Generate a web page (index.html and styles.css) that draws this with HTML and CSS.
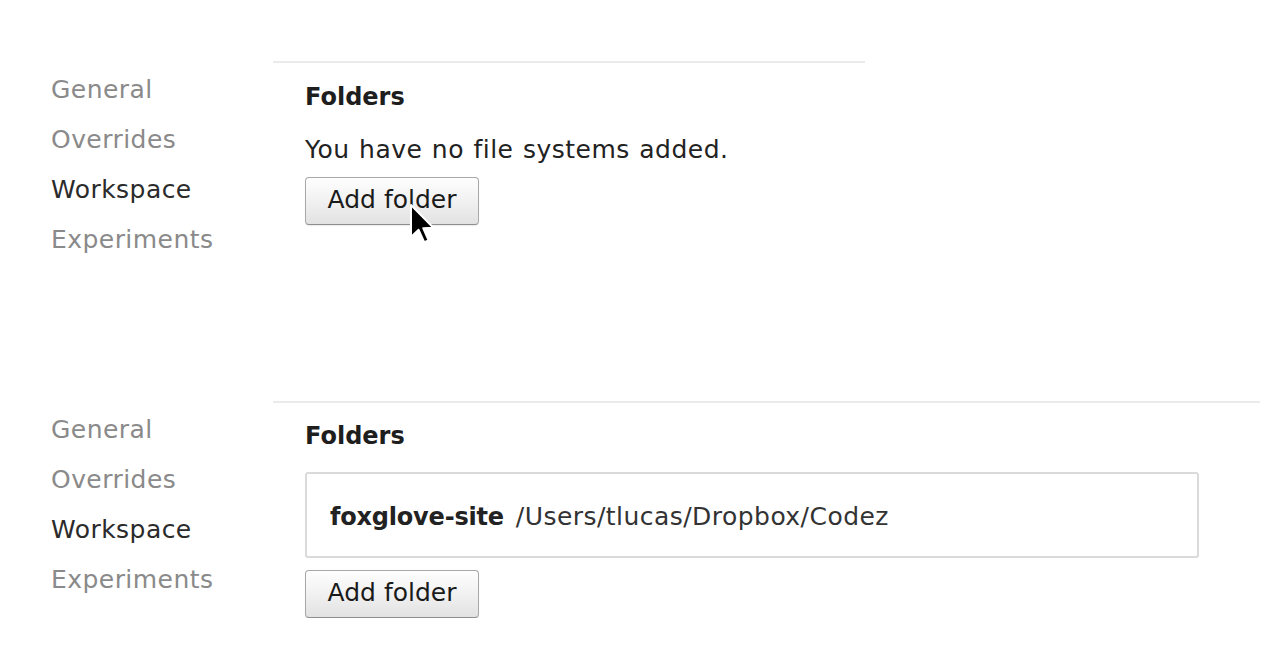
FILE: index.html
```html
<!DOCTYPE html>
<html>
<head>
<meta charset="utf-8">
<link rel="stylesheet" href="styles.css">
</head>
<body>
<div class="page">
  <section class="panel panel-first">
    <nav class="sidebar">
      <div class="nav-item">General</div>
      <div class="nav-item">Overrides</div>
      <div class="nav-item active">Workspace</div>
      <div class="nav-item">Experiments</div>
    </nav>
    <div class="content content-narrow">
      <h2 class="heading">Folders</h2>
      <p class="empty">You have no file systems added.</p>
      <div class="btn-wrap">
        <button class="btn">Add folder</button>
        <svg class="cursor" width="26" height="42" viewBox="0 0 13 21">
          <path d="M1 1 L1 17 L4.8 13.4 L7.6 19.6 L9.8 18.7 L7.1 12.6 L12.2 12.4 Z" fill="#000" stroke="#fff" stroke-width="1" stroke-linejoin="round"/>
        </svg>
      </div>
    </div>
  </section>

  <section class="panel panel-second">
    <nav class="sidebar">
      <div class="nav-item">General</div>
      <div class="nav-item">Overrides</div>
      <div class="nav-item active">Workspace</div>
      <div class="nav-item">Experiments</div>
    </nav>
    <div class="content content-wide">
      <h2 class="heading">Folders</h2>
      <div class="folder-list">
        <div class="folder-row">
          <span class="folder-name">foxglove-site</span>
          <span class="folder-path">/Users/tlucas/Dropbox/Codez</span>
        </div>
      </div>
      <div class="btn-wrap">
        <button class="btn">Add folder</button>
      </div>
    </div>
  </section>
</div>
</body>
</html>
```

FILE: styles.css
```css
html, body {
  margin: 0;
  padding: 0;
  background: #ffffff;
}

body {
  font-family: "DejaVu Sans", Verdana, sans-serif;
  color: #222222;
  font-size: 25px;
}

.page {
  display: flex;
  flex-direction: column;
}

.panel {
  display: flex;
  flex-direction: row;
  align-items: flex-start;
}

.panel-first {
  margin-top: 61px;
  height: 340px;
}

.sidebar {
  width: 222px;
  padding-left: 51px;
  padding-top: 4px;
  display: flex;
  flex-direction: column;
}

.nav-item {
  height: 50px;
  line-height: 50px;
  color: #8a8a8a;
  white-space: nowrap;
  letter-spacing: 0.45px;
}

.nav-item.active {
  color: #2b2b2b;
}

.content {
  border-top: 2px solid #ebebeb;
  padding-left: 32px;
  box-sizing: border-box;
}

.content-narrow {
  width: 592px;
}

.content-wide {
  width: 987px;
  padding-right: 61px;
}

.heading {
  margin: 19px 0 0 0;
  font-size: 24px;
  font-weight: bold;
  line-height: 30px;
  color: #1e1e1e;
}

.empty {
  margin: 23px 0 0 0;
  line-height: 30px;
  letter-spacing: 0.5px;
  word-spacing: 1px;
}

.btn-wrap {
  position: relative;
  margin-top: 12px;
  height: 48px;
}

.btn {
  font-family: "DejaVu Sans", Verdana, sans-serif;
  font-size: 25px;
  color: #1a1a1a;
  height: 48px;
  width: 174px;
  padding: 0 0 3px 0;
  border: 1px solid #a8a8a8;
  border-bottom-color: #8e8e8e;
  border-radius: 4px;
  background: linear-gradient(#fefefe, #f1f1f1 50%, #e2e2e2);
  box-shadow: 0 1px 1px rgba(0, 0, 0, 0.08);
}

.cursor {
  position: absolute;
  left: 104px;
  top: 26px;
}

.panel-second .heading {
  margin-top: 18px;
}

.folder-list {
  margin-top: 21px;
  border: 2px solid #dadada;
  border-radius: 3px;
  height: 86px;
  box-sizing: border-box;
  display: flex;
  align-items: center;
  padding-left: 23px;
}

.folder-row {
  display: flex;
  align-items: baseline;
  white-space: nowrap;
  margin-top: 2px;
}

.folder-name {
  font-weight: bold;
  font-size: 24px;
  color: #222222;
  letter-spacing: -0.2px;
}

.folder-path {
  margin-left: 12px;
  color: #333333;
  letter-spacing: 0.45px;
}

.panel-second .btn-wrap {
  margin-top: 12px;
}
```
